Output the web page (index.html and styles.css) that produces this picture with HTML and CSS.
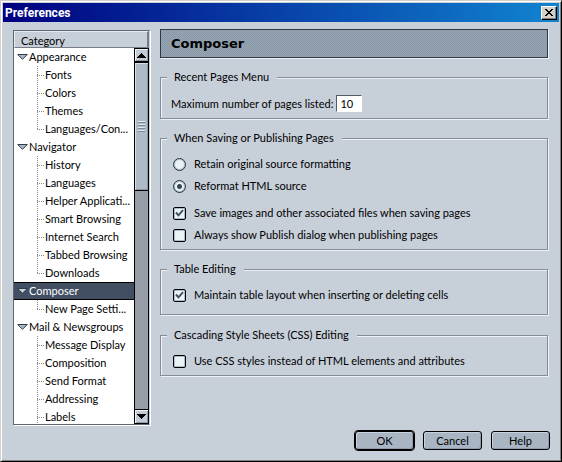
FILE: index.html
```html
<!DOCTYPE html>
<html lang="en">
<head>
<meta charset="utf-8">
<title>Preferences</title>
<link rel="stylesheet" href="styles.css">
</head>
<body>
<div class="window">
  <header class="titlebar">
    <span class="titlebar-text">Preferences</span>
    <button class="close" type="button" aria-label="Close"><svg width="8" height="7" viewBox="0 0 8 7" shape-rendering="crispEdges"><path d="M0 0h2v1h1v1h2v-1h1v-1h2v1h-1v1h-1v1h-1v1h1v1h1v1h1v1h-2v-1h-1v-1h-2v1h-1v1h-2v-1h1v-1h1v-1h1v-1h-1v-1h-1v-1h-1z"/></svg></button>
  </header>
  <div class="body">
    <nav class="tree" aria-label="Category">
      <div class="tree-head">Category</div>
      <div class="tree-body">
        <ul class="rows">
          <li class="row parent"><svg class="twisty" viewBox="0 0 11 6"><path d="M.7.5h9.6L5.5 5.3z"/></svg>Appearance</li>
          <li class="row child">Fonts</li>
          <li class="row child">Colors</li>
          <li class="row child">Themes</li>
          <li class="row child last">Languages/Con...</li>
          <li class="row parent"><svg class="twisty" viewBox="0 0 11 6"><path d="M.7.5h9.6L5.5 5.3z"/></svg>Navigator</li>
          <li class="row child">History</li>
          <li class="row child">Languages</li>
          <li class="row child">Helper Applicati...</li>
          <li class="row child">Smart Browsing</li>
          <li class="row child">Internet Search</li>
          <li class="row child">Tabbed Browsing</li>
          <li class="row child last">Downloads</li>
          <li class="row parent selected"><svg class="twisty" viewBox="0 0 11 6"><path d="M.7.5h9.6L5.5 5.3z"/></svg>Composer</li>
          <li class="row child last">New Page Setti...</li>
          <li class="row parent"><svg class="twisty" viewBox="0 0 11 6"><path d="M.7.5h9.6L5.5 5.3z"/></svg>Mail &amp; Newsgroups</li>
          <li class="row child">Message Display</li>
          <li class="row child">Composition</li>
          <li class="row child">Send Format</li>
          <li class="row child">Addressing</li>
          <li class="row child">Labels</li>
        </ul>
        <div class="scrollbar">
          <button class="arrow" type="button" aria-label="Scroll up"><svg width="9" height="5" viewBox="0 0 9 5" shape-rendering="crispEdges"><path d="M4 0h1v1h1v1h1v1h1v1h1v1h-9v-1h1v-1h1v-1h1v-1h1z"/></svg></button>
          <div class="thumb"><i></i><i></i><i></i><i></i></div>
          <div class="track"></div>
          <button class="arrow down" type="button" aria-label="Scroll down"><svg width="9" height="5" viewBox="0 0 9 5" shape-rendering="crispEdges"><path d="M0 0h9v1h-1v1h-1v1h-1v1h-1v1h-1v-1h-1v-1h-1v-1h-1v-1h-1z"/></svg></button>
        </div>
      </div>
    </nav>
    <main class="panel">
      <h1 class="panel-title">Composer</h1>
      <form class="groups">
        <fieldset class="group">
          <legend>Recent Pages Menu</legend>
          <div class="field"><label for="max">Maximum number of pages listed:</label><input class="number" id="max" type="text" value="10"></div>
        </fieldset>
        <fieldset class="group">
          <legend>When Saving or Publishing Pages</legend>
          <label class="option"><input class="radio" type="radio" name="format">Retain original source formatting</label>
          <label class="option"><input class="radio" type="radio" name="format" checked>Reformat HTML source</label>
          <div class="options">
            <label class="option"><span class="box"><input class="check" type="checkbox" checked><svg class="mark" width="9" height="8" viewBox="0 0 9 8"><path d="M1 3.500l2.500 2.800L8 1.200"/></svg></span>Save images and other associated files when saving pages</label>
            <label class="option"><span class="box"><input class="check" type="checkbox"></span>Always show Publish dialog when publishing pages</label>
          </div>
        </fieldset>
        <fieldset class="group roomy">
          <legend>Table Editing</legend>
          <label class="option"><span class="box"><input class="check" type="checkbox" checked><svg class="mark" width="9" height="8" viewBox="0 0 9 8"><path d="M1 3.500l2.500 2.800L8 1.200"/></svg></span>Maintain table layout when inserting or deleting cells</label>
        </fieldset>
        <fieldset class="group">
          <legend>Cascading Style Sheets (CSS) Editing</legend>
          <label class="option"><span class="box"><input class="check" type="checkbox"></span>Use CSS styles instead of HTML elements and attributes</label>
        </fieldset>
      </form>
    </main>
  </div>
  <footer class="actions">
    <button class="button default" type="button">OK</button>
    <button class="button" type="button">Cancel</button>
    <button class="button" type="button">Help</button>
  </footer>
</div>
</body>
</html>
```
FILE: styles.css
```css
* { box-sizing: border-box; }
body {
  margin: 0;
  font: 11px/16px Lato, "Liberation Sans", sans-serif;
  color: #000;
}
button, input { font: inherit; color: inherit; }
.window {
  display: flex;
  flex-direction: column;
  height: 100vh;
  padding: 1px;
  background: #c7cfd9;
  border: 1px solid;
  border-color: #d4d0c8 #000 #000 #d4d0c8;
  box-shadow: inset 1px 1px 0 #fff, inset -1px -1px 0 #808080;
}
.titlebar {
  display: flex;
  align-items: center;
  justify-content: space-between;
  height: 19px;
  margin: 1px 1px 0;
  padding: 0 2px;
  background: linear-gradient(90deg, #000080, #1084d0);
  color: #fff;
  font-family: Roboto, "Liberation Sans", sans-serif;
  font-size: 12px;
  font-weight: 700;
  flex: none;
}
.close {
  display: grid;
  place-items: center;
  width: 16px;
  height: 14px;
  padding: 0 1px 1px 0;
  background: #d4d0c8;
  border: 1px solid;
  border-color: #fff #000 #000 #fff;
  box-shadow: inset -1px -1px 0 #808080;
}
.close svg { fill: #000; }
.body {
  display: grid;
  grid-template-columns: 137px minmax(0, 1fr);
  grid-template-rows: minmax(0, 1fr);
  gap: 10px;
  flex: 1;
  min-height: 0;
  padding: 7px 11px 0;
}
.tree {
  display: flex;
  flex-direction: column;
  margin-top: 1px;
  min-height: 0;
  background: #fff;
  border: 1px solid #60656f;
  border-right-color: #c7cfd9;
  box-shadow: 1px 1px 0 #fff;
}
.tree-head {
  height: 17px;
  padding-left: 6px;
  background: #c7cfd9;
  border: 1px solid;
  border-color: #e8eef4 #777d87 #777d87 #e8eef4;
  border-right-width: 2px;
  line-height: 17px;
  flex: none;
}
.tree-body { display: flex; flex: 1; min-height: 0; }
.rows { flex: 1; min-width: 0; margin: 0; padding: 0; overflow: hidden; list-style: none; }
.row { display: flex; align-items: center; height: 18px; white-space: nowrap; }
.parent { gap: 1px; padding-left: 3px; }
.twisty { width: 11px; height: 6px; fill: #a9b8c9; stroke: #303a48; flex: none; }
.selected { background: #424f63; color: #fff; border: solid #000; border-width: 1px 0; }
.selected .twisty { fill: #c5d2df; stroke: #303a48; }
.child {
  padding-left: 31px;
  background:
    repeating-linear-gradient(#888 0 1px, transparent 1px 2px) 23px 0 / 1px 100% no-repeat,
    repeating-linear-gradient(90deg, #888 0 1px, transparent 1px 2px) 23px 9px / 7px 1px no-repeat;
}
.last { background-size: 1px 10px, 7px 1px; }
.scrollbar {
  display: flex;
  flex-direction: column;
  width: 15px;
  background: #979ea7;
  border: solid #000;
  border-width: 0 1px;
}
.arrow {
  display: grid;
  place-items: center;
  height: 15px;
  padding: 0;
  background: #c2ccd7;
  border: solid #000;
  border-width: 1px 0 2px;
  box-shadow: inset 1px 1px 0 #eef4f8, inset -1px -1px 0 #8d9aa8;
  flex: none;
}
.down { border-width: 1px 0; }
.thumb {
  display: flex;
  flex-direction: column;
  align-items: center;
  justify-content: center;
  flex: 127 0 0;
  gap: 1px;
  background: #aebac6;
  border-bottom: 1px solid #000;
  box-shadow: inset 1px 1px 0 #d5e0e9, inset -1px -1px 0 #8a98a6;
}
.thumb i { width: 7px; height: 2px; background: #e0e9f0; border-bottom: 1px solid #78899a; }
.track { flex: 218 0 0; }
.panel { min-width: 0; }
.panel-title {
  height: 29px;
  margin: 0 1px 11px 0;
  padding-left: 10px;
  background: repeating-conic-gradient(#8b9aa9 0 25%, #96a4b2 0 50%) 0 0 / 2px 2px;
  border: 1px solid #2d3945;
  box-shadow: 1px 1px 0 #eef2f6;
  font: 700 13px/28px "DejaVu Sans", sans-serif;
}
.group {
  min-width: 0;
  margin: 0 1px 11px 0;
  padding: 7px 12px 3px;
  border: 1px solid #858c98;
  box-shadow: 1px 1px 0 #eef2f6, inset 1px 1px 0 #eef2f6;
}
.group legend { margin-left: -6px; padding: 0 8px 0 7px; background: #c7cfd9; }
.roomy { padding-bottom: 8px; margin-bottom: 12px; }
.field { display: flex; align-items: center; gap: 3px; height: 23px; margin-left: -2px; }
.number {
  width: 26px;
  height: 17px;
  padding: 0 3px;
  background: #fff;
  border: 1px solid;
  border-color: #555b66 #fff #fff #555b66;
}
.option { display: flex; align-items: center; gap: 8px; height: 22px; white-space: nowrap; }
.options { margin-top: 5px; }
.box { display: grid; place-items: center; flex: none; }
.box > * { grid-area: 1 / 1; }
.mark { fill: none; stroke: #424f63; stroke-width: 2; pointer-events: none; }
.radio, .check {
  appearance: none;
  width: 13px;
  height: 13px;
  margin: 0;
  background: #e9f3f5;
  border: 1px solid #27313e;
  box-shadow: inset 0 0 0 1px #a9c0c8;
  flex: none;
}
.radio { border-radius: 50%; }
.radio:checked { background: radial-gradient(circle, #3b4757 0 2px, #e9f3f5 3px); }
.check { border-color: #000; border-radius: 2px; }
.actions { display: flex; justify-content: flex-end; gap: 9px; padding: 6px 10px 10px; flex: none; }
.button {
  width: 59px;
  height: 19px;
  padding: 0;
  background: #a9b5c3;
  border: 1px solid #000;
  border-radius: 3px;
  box-shadow: inset 1px 1px 0 #c7d2dd, inset -1px -1px 0 #8f9cab;
  line-height: 17px;
}
.default { outline: 1px solid #000; }
```
